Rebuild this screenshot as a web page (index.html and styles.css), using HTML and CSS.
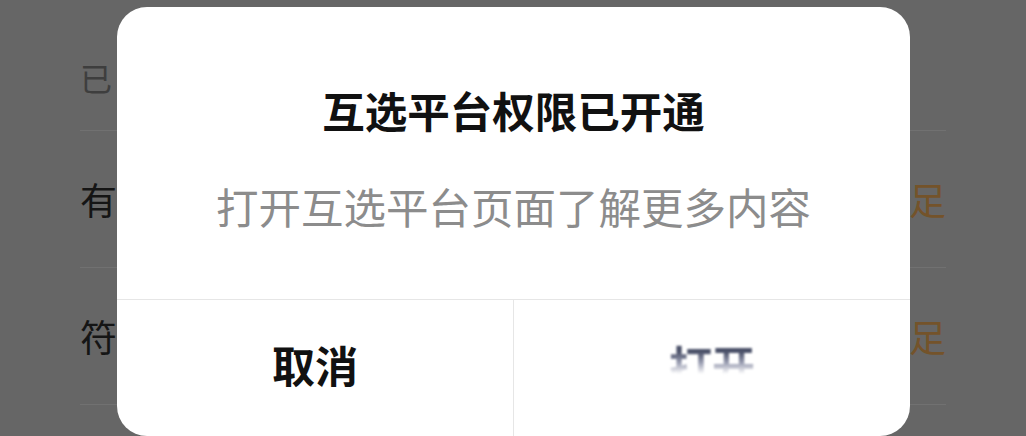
FILE: index.html
```html
<!DOCTYPE html>
<html lang="zh-CN">
<head>
<meta charset="utf-8">
<title>互选平台权限已开通</title>
<link rel="stylesheet" href="styles.css">
</head>
<body>
<div class="page">
  <div class="section-header">已</div>
  <div class="row"><span class="row-label">有</span><span class="row-status">足</span></div>
  <div class="row"><span class="row-label">符</span><span class="row-status">足</span></div>
  <div class="row row-last"></div>
</div>

<div class="dialog">
  <div class="dialog-body">
    <div class="dialog-title">互选平台权限已开通</div>
    <div class="dialog-text">打开互选平台页面了解更多内容</div>
  </div>
  <div class="dialog-actions">
    <div class="action action-cancel">取消</div>
    <div class="action action-open"><span class="open-label">打开</span></div>
  </div>
</div>
</body>
</html>
```
FILE: styles.css
```css
html, body {
  margin: 0;
  padding: 0;
}
body {
  width: 1026px;
  height: 436px;
  overflow: hidden;
  background: #666666;
  font-family: "Noto Sans CJK SC", "Noto Sans", sans-serif;
  position: relative;
}
.page {
  padding: 0 80px;
}
.section-header {
  height: 130px;
  box-sizing: border-box;
  padding-top: 57px;
  font-size: 32px;
  line-height: 40px;
  color: #3e3e3e;
}
.row {
  height: 137px;
  box-sizing: border-box;
  border-top: 1px solid #717171;
  display: flex;
  align-items: center;
  justify-content: space-between;
  font-size: 37px;
}
.row-last {
  height: 31px;
}
.row-label {
  color: #151515;
}
.row-status {
  color: #74532a;
}
.dialog {
  position: absolute;
  left: 117px;
  top: 7px;
  width: 793px;
  height: 429px;
  background: #ffffff;
  border-radius: 30px;
  display: flex;
  flex-direction: column;
  overflow: hidden;
}
.dialog-body {
  height: 293px;
  box-sizing: border-box;
  padding-top: 78px;
  text-align: center;
  border-bottom: 1px solid #e6e6e6;
}
.dialog-title {
  font-size: 42.5px;
  line-height: 50px;
  font-weight: 700;
  color: #111111;
}
.dialog-text {
  margin-top: 46px;
  font-size: 42.5px;
  line-height: 50px;
  color: #8c8c8c;
}
.dialog-actions {
  flex: 1;
  display: flex;
}
.action {
  flex: 1;
  display: flex;
  align-items: center;
  justify-content: center;
  font-size: 43px;
  font-weight: 700;
  padding-bottom: 8px;
}
.action-cancel {
  color: #111111;
  border-right: 1px solid #e6e6e6;
}
.open-label {
  color: transparent;
  background: linear-gradient(to bottom, #4a5068 0%, #4a5068 30%, #9a9eb2 48%, #ffffff 66%);
  -webkit-background-clip: text;
  background-clip: text;
  filter: blur(0.8px);
}
```
